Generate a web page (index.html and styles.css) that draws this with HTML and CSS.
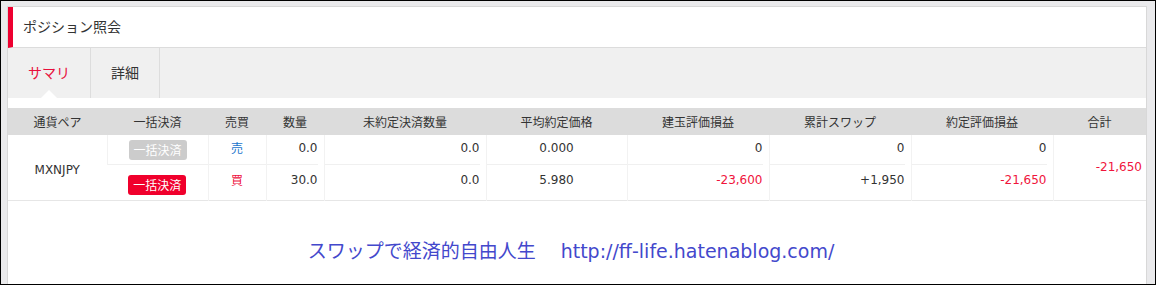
FILE: index.html
```html
<!DOCTYPE html>
<html>
<head>
	<title>ポジション照会</title>
	<meta charset="utf-8">
	<link rel="stylesheet" href="styles.css">
</head>
<body>

	<div id="screen">
		<div id="panel">

			<div id="panel-header">ポジション照会</div>

			<div id="tabs">
				<div class="tab active">サマリ</div>
				<div class="tab">詳細</div>
			</div>

			<div id="table-wrap">
				<table id="positions">
					<colgroup>
						<col style="width: 99px">
						<col style="width: 101px">
						<col style="width: 58px">
						<col style="width: 58px">
						<col style="width: 162px">
						<col style="width: 141px">
						<col style="width: 142px">
						<col style="width: 142px">
						<col style="width: 142px">
						<col style="width: 93px">
					</colgroup>
					<thead>
						<tr>
							<th>通貨ペア</th>
							<th>一括決済</th>
							<th>売買</th>
							<th>数量</th>
							<th>未約定決済数量</th>
							<th>平均約定価格</th>
							<th>建玉評価損益</th>
							<th>累計スワップ</th>
							<th>約定評価損益</th>
							<th>合計</th>
						</tr>
					</thead>
					<tbody>
						<tr class="first">
							<td rowspan="2" class="pair">MXNJPY</td>
							<td class="c"><div class="cell btn-cell"><span class="btn off">一括決済</span></div></td>
							<td class="c"><div class="cell sell">売</div></td>
							<td class="r"><div class="cell">0.0</div></td>
							<td class="r"><div class="cell">0.0</div></td>
							<td class="c"><div class="cell">0.000</div></td>
							<td class="r"><div class="cell">0</div></td>
							<td class="r"><div class="cell">0</div></td>
							<td class="r"><div class="cell">0</div></td>
							<td rowspan="2" class="total minus">-21,650</td>
						</tr>
						<tr class="second">
							<td class="c"><div class="cell btn-cell"><span class="btn on">一括決済</span></div></td>
							<td class="c"><div class="cell buy">買</div></td>
							<td class="r"><div class="cell">30.0</div></td>
							<td class="r"><div class="cell">0.0</div></td>
							<td class="c"><div class="cell">5.980</div></td>
							<td class="r"><div class="cell minus">-23,600</div></td>
							<td class="r"><div class="cell">+1,950</div></td>
							<td class="r"><div class="cell minus">-21,650</div></td>
						</tr>
					</tbody>
				</table>
			</div>

			<div id="footer">スワップで経済的自由人生　 http://ff-life.hatenablog.com/</div>

		</div>
	</div>

</body>
</html>
```

FILE: styles.css
```css
* {
	margin: 0;
	padding: 0;
	box-sizing: border-box;
}

body {
	font-family: "DejaVu Sans", "Noto Sans CJK JP", sans-serif;
	color: #333333;
	background-color: #ffffff;
}

#screen {
	width: 1156px;
	height: 285px;
	border: 1px solid #000000;
	padding: 5px 8px 0px 6px;
	background-color: #eaeaec;
}

#panel {
	height: 100%;
	border: 1px solid #d8d8d8;
	border-bottom: none;
	background-color: #ffffff;
}




	#panel-header {
		height: 41px;
		border-left: 5px solid #ee0030;
		border-bottom: 1px solid #dcdcdc;
		padding-left: 10px;
		font-family: "Noto Sans CJK JP", sans-serif;
		font-size: 14px;
		line-height: 39px;
	}




	#tabs {
		display: flex;
		height: 50px;
		background-color: #f0f0f0;
	}

		.tab {
			position: relative;
			padding: 0px 20px;
			border-right: 1px solid #dddddd;
			font-family: "Noto Sans CJK JP", sans-serif;
			font-size: 14px;
			line-height: 49px;
			color: #333333;
		}

		.tab.active {
			color: #e8103c;
		}

		.tab.active::after {
			content: "";
			position: absolute;
			left: 50%;
			bottom: 0px;
			margin-left: -8px;
			border-left: 8px solid transparent;
			border-right: 8px solid transparent;
			border-bottom: 8px solid #ffffff;
		}




	#table-wrap {
		padding-top: 10px;
	}

		#positions {
			width: 1138px;
			table-layout: fixed;
			border-collapse: collapse;
			font-size: 12px;
		}

			#positions th {
				height: 27px;
				background-color: #dcdcdc;
				font-family: "Noto Sans CJK JP", sans-serif;
				font-weight: normal;
				font-size: 12px;
				text-align: center;
				color: #333333;
			}

			#positions td {
				padding: 0px;
				border-left: 1px solid #f2f2f2;
				vertical-align: top;
			}

			#positions td:first-child {
				border-left: none;
			}

			#positions tbody {
				border-bottom: 1px solid #e6e6e6;
			}

			#positions td.r {
				padding-right: 6px;
				text-align: right;
			}

			#positions td.c {
				text-align: center;
			}

			#positions td.pair {
				text-align: center;
				vertical-align: middle;
				padding-top: 4px;
			}

			#positions td.total {
				text-align: right;
				vertical-align: middle;
				padding-right: 4px;
				padding-bottom: 1px;
			}

				.cell {
					line-height: 16px;
				}

				.first .cell {
					height: 30px;
					padding-top: 5px;
					border-bottom: 1px solid #f0f0f0;
				}

				.second .cell {
					height: 35px;
					padding-top: 7px;
				}

				.second .btn-cell {
					padding-top: 10px;
				}

				.first .btn-cell {
					padding-top: 5px;
				}

					.btn {
						display: inline-block;
						width: 58px;
						height: 20px;
						border-radius: 3px;
						font-family: "Noto Sans CJK JP", sans-serif;
						font-size: 12px;
						line-height: 20px;
						color: #ffffff;
					}

					.btn.off {
						background-color: #cccccc;
					}

					.btn.on {
						background-color: #f0002c;
					}

				.sell {
					color: #1a74cc;
					font-family: "Noto Sans CJK JP", sans-serif;
				}

				.buy {
					color: #ee1040;
					font-family: "Noto Sans CJK JP", sans-serif;
				}

				.minus {
					color: #f0143c;
				}




	#footer {
		margin-top: 38px;
		padding-right: 12px;
		font-size: 19px;
		line-height: 24px;
		text-align: center;
		color: #4348cc;
		white-space: pre;
	}
```
